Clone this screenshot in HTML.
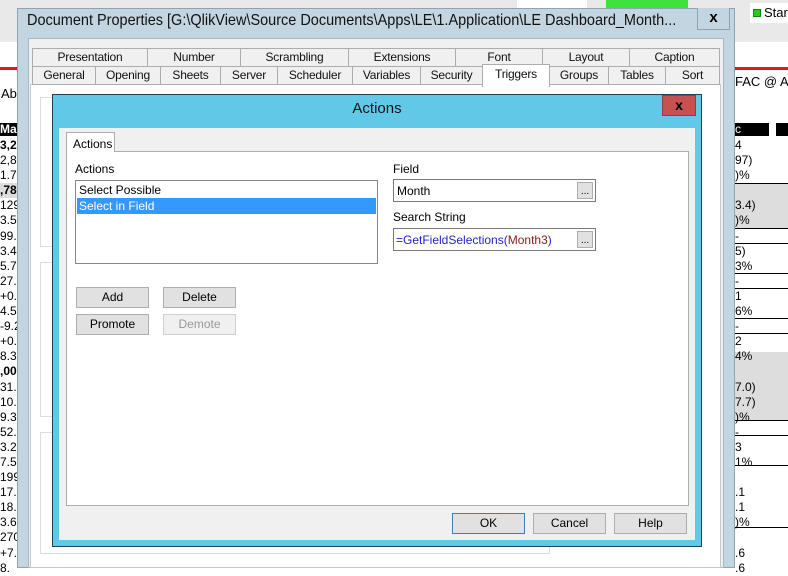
<!DOCTYPE html>
<html><head><meta charset="utf-8"><style>
*{margin:0;padding:0;box-sizing:border-box}
body{width:788px;height:566px;overflow:hidden;position:relative;background:#fff;font-family:"Liberation Sans",sans-serif;font-size:12px;color:#000}
.a{position:absolute;white-space:nowrap}
.tab{position:absolute;height:19px;border:1px solid #adadad;background:#f0f0f0;text-align:center;font-size:12px;line-height:17px;color:#111;letter-spacing:-0.2px}
.btn{position:absolute;height:21px;border:1px solid #adadad;background:#e1e1e1;text-align:center;line-height:19px;font-size:12px}
.num{position:absolute;font-size:12px;line-height:14px;white-space:nowrap;overflow:hidden}
</style></head><body>
<div class="a" style="left:0;top:0;width:788px;height:42px;background:#e9e9e9"></div>
<div class="a" style="left:0;top:42px;width:788px;height:524px;background:#fff"></div>
<div class="a" style="left:517px;top:0;width:70px;height:8px;background:#fff"></div>
<div class="a" style="left:606px;top:0;width:82px;height:8px;background:#3ee13e"></div>
<div class="a" style="left:750px;top:3px;width:38px;height:20px;background:#fff"></div>
<div class="a" style="left:753px;top:9px;width:8px;height:8px;background:#2c2;border:1px solid #181"></div>
<div class="a" style="left:764px;top:5px;font-size:13px">Star</div>
<div class="a" style="left:0;top:67px;width:17px;height:3px;background:#e11"></div>
<div class="a" style="left:735px;top:67px;width:53px;height:3px;background:#e11"></div>
<div class="a" style="left:1px;top:86px;font-size:13px;width:16px;overflow:hidden">Ab</div>
<div class="a" style="left:735px;top:74px;font-size:13px">FAC @ AC</div>
<div class="a" style="left:0;top:123px;width:17px;height:13px;background:#000;color:#fff;font-weight:bold;font-size:12px;line-height:13px;overflow:hidden">Ma</div>
<div class="a" style="left:735px;top:123px;width:34px;height:13px;background:#000;color:#fff;font-size:12px;line-height:13px">c</div>
<div class="a" style="left:776px;top:123px;width:12px;height:13px;background:#000"></div>
<div class="a" style="left:0;top:183px;width:17px;height:15px;background:#ddd"></div>
<div class="a" style="left:735px;top:184px;width:53px;height:44px;background:#ddd"></div>
<div class="a" style="left:735px;top:352px;width:53px;height:68px;background:#ddd"></div>
<div class="num" style="left:0;top:138px;width:17px;line-height:15.1px">
<b>3,29</b><br>2,89<br>1.7<br><b>,78</b><br>129<br>3.5<br>99.<br>3.4<br>5.79<br>27.<br>+0.1<br>4.5<br>-9.2<br>+0.0<br>8.3<br><b>,00</b><br>31.<br>10.<br>9.3<br>52.<br>3.2<br>7.5<br>199<br>17.<br>18.<br>3.6<br>270<br>+7.5<br>8.</div>
<div class="num" style="left:735px;top:138px;line-height:15.1px">
4<br>97)<br>)%<br><br>3.4)<br>)%<br>-<br>5)<br>3%<br>-<br>1<br>6%<br>-<br>2<br>4%<br><br>7.0)<br>7.7)<br>)%<br>-<br>3<br>1%<br><br>.1<br>.1<br>)%<br><br>.6<br>.6</div>
<div class="a" style="left:735px;top:183px;width:53px;height:1px;background:#000"></div>
<div class="a" style="left:735px;top:228px;width:53px;height:1px;background:#000"></div>
<div class="a" style="left:735px;top:243px;width:53px;height:1px;background:#000"></div>
<div class="a" style="left:735px;top:273px;width:53px;height:1px;background:#000"></div>
<div class="a" style="left:735px;top:288px;width:53px;height:1px;background:#000"></div>
<div class="a" style="left:735px;top:318px;width:53px;height:1px;background:#000"></div>
<div class="a" style="left:735px;top:333px;width:53px;height:1px;background:#000"></div>
<div class="a" style="left:735px;top:420px;width:53px;height:1px;background:#000"></div>
<div class="a" style="left:735px;top:435px;width:53px;height:1px;background:#000"></div>
<div class="a" style="left:735px;top:465px;width:53px;height:1px;background:#000"></div>
<div class="a" style="left:735px;top:527px;width:53px;height:1px;background:#000"></div>

<div class="a" style="left:17px;top:8px;width:718px;height:560px;background:#c3d5e0;border:1px solid #8da4b2"></div>
<div class="a" style="left:27px;top:12px;font-size:16px;color:#111;transform:scaleX(0.905);transform-origin:0 0">Document Properties [G:\QlikView\Source Documents\Apps\LE\1.Application\LE Dashboard_Month...</div>
<div class="a" style="left:697px;top:8px;width:33px;height:22px;border:1px solid #8da4b2;border-top:none;text-align:center;font-weight:bold;font-size:15px;line-height:20px;background:#c3d5e0">x</div>
<div class="a" style="left:28px;top:38px;width:696px;height:530px;background:#f0f0f0;border:1px solid #a8b8c2"></div>
<div class="a" style="left:30px;top:84px;width:691px;height:484px;background:#fff;border:1px solid #c8c8c8"></div>
<div class="a" style="left:40px;top:97px;width:12px;height:150px;border:1px solid #ddd;border-right:none"></div>
<div class="a" style="left:40px;top:262px;width:12px;height:155px;border:1px solid #ddd;border-right:none"></div>
<div class="a" style="left:40px;top:432px;width:12px;height:122px;border:1px solid #ddd;border-right:none"></div>
<div class="a" style="left:40px;top:546px;width:510px;height:8px;border:1px solid #ddd;border-top:none"></div>

<div class="tab" style="left:32px;top:48px;width:116px">Presentation</div>
<div class="tab" style="left:147px;top:48px;width:94px">Number</div>
<div class="tab" style="left:240px;top:48px;width:109px">Scrambling</div>
<div class="tab" style="left:348px;top:48px;width:108px">Extensions</div>
<div class="tab" style="left:455px;top:48px;width:88px">Font</div>
<div class="tab" style="left:542px;top:48px;width:88px">Layout</div>
<div class="tab" style="left:629px;top:48px;width:91px">Caption</div>
<div class="tab" style="left:32px;top:66px;width:64px">General</div>
<div class="tab" style="left:95px;top:66px;width:66px">Opening</div>
<div class="tab" style="left:160px;top:66px;width:61px">Sheets</div>
<div class="tab" style="left:220px;top:66px;width:58px">Server</div>
<div class="tab" style="left:277px;top:66px;width:76px">Scheduler</div>
<div class="tab" style="left:352px;top:66px;width:69px">Variables</div>
<div class="tab" style="left:420px;top:66px;width:63px">Security</div>
<div class="tab" style="left:482px;top:64px;width:68px;height:23px;background:#fff;border-bottom:none;line-height:18px">Triggers</div>
<div class="tab" style="left:549px;top:66px;width:60px">Groups</div>
<div class="tab" style="left:608px;top:66px;width:58px">Tables</div>
<div class="tab" style="left:665px;top:66px;width:55px">Sort</div>

<div class="a" style="left:52px;top:94px;width:650px;height:453px;background:#62c8e8;border:1px solid #22424f"></div>
<div class="a" style="left:52px;top:100px;width:650px;text-align:center;font-size:15px;color:#111">Actions</div>
<div class="a" style="left:662px;top:95px;width:34px;height:21px;background:#c75050;border:1px solid #9a3a3a;color:#000;font-weight:bold;text-align:center;font-size:14px;line-height:18px">x</div>
<div class="a" style="left:59px;top:128px;width:636px;height:412px;background:#f0f0f0"></div>
<div class="a" style="left:66px;top:151px;width:623px;height:355px;background:#fff;border:1px solid #adadad"></div>
<div class="a" style="left:66px;top:132px;width:49px;height:20px;background:#fff;border:1px solid #adadad;border-bottom:none;font-size:12px;padding:4px 0 0 6px">Actions</div>
<div class="a" style="left:75px;top:162px">Actions</div>
<div class="a" style="left:75px;top:180px;width:303px;height:84px;border:1px solid #828790;background:#fff"></div>
<div class="a" style="left:79px;top:183px">Select Possible</div>
<div class="a" style="left:77px;top:198px;width:299px;height:16px;background:#3399ff;color:#fff;padding:1px 0 0 2px">Select in Field</div>
<div class="btn" style="left:76px;top:287px;width:73px">Add</div>
<div class="btn" style="left:163px;top:287px;width:73px">Delete</div>
<div class="btn" style="left:76px;top:314px;width:73px">Promote</div>
<div class="btn" style="left:163px;top:314px;width:73px;background:#f0f0f0;border-color:#d0d0d0;color:#999">Demote</div>
<div class="a" style="left:393px;top:162px">Field</div>
<div class="a" style="left:393px;top:179px;width:203px;height:23px;border:1px solid #7a7a7a;background:#fff;padding:4px 0 0 3px">Month</div>
<div class="a" style="left:577px;top:182px;width:16px;height:17px;border:1px solid #adadad;background:#e1e1e1;font-size:10px;text-align:center;line-height:18px">...</div>
<div class="a" style="left:393px;top:210px">Search String</div>
<div class="a" style="left:393px;top:228px;width:203px;height:23px;border:1px solid #7a7a7a;background:#fff;padding:4px 0 0 2px"><span style="color:#2222cc">=GetFieldSelections(</span><span style="color:#8b1a1a">Month3</span><span style="color:#2222cc">)</span></div>
<div class="a" style="left:577px;top:231px;width:16px;height:17px;border:1px solid #adadad;background:#e1e1e1;font-size:10px;text-align:center;line-height:18px">...</div>
<div class="btn" style="left:452px;top:513px;width:73px;border-color:#3c7fb1">OK</div>
<div class="btn" style="left:533px;top:513px;width:73px">Cancel</div>
<div class="btn" style="left:614px;top:513px;width:73px">Help</div>
</body></html>
